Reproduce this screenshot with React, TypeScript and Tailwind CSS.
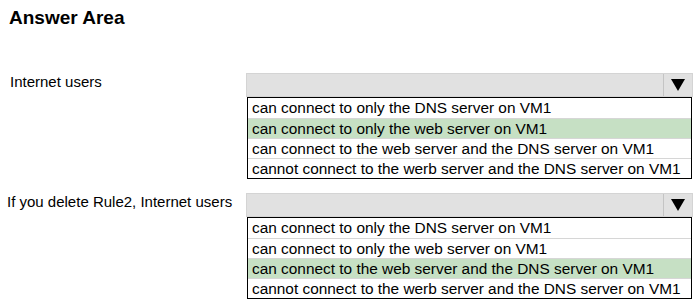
import React from "react";

const options = [
  "can connect to only the DNS server on VM1",
  "can connect to only the web server on VM1",
  "can connect to the web server and the DNS server on VM1",
  "cannot connect to the werb server and the DNS server on VM1",
];

function Dropdown({ selected }: { selected: number }) {
  return (
    <div className="w-[447px] flex flex-col">
      <div className="h-[24px] flex bg-[#e1e1e1] border border-[#d4d4d4]">
        <div className="flex-1" />
        <div className="w-[29px] border-l border-[#c4c4c4] flex items-center justify-center">
          <svg width="14" height="12" viewBox="0 0 14 12">
            <polygon points="0,0 14,0 7,12" fill="#000" />
          </svg>
        </div>
      </div>
      <div className="mx-[1px] border border-black flex flex-col">
        {options.map((o, i) => (
          <div
            key={i}
            className={`h-[20px] flex items-center pl-[4px] text-[15.4px] leading-[20px] text-black whitespace-nowrap ${
              i > 0 ? "border-t border-[#d6d6d6]" : ""
            } ${i === selected ? "bg-[#c6e0c4]" : "bg-white"}`}
          >
            {o}
          </div>
        ))}
      </div>
    </div>
  );
}

export default function App() {
  return (
    <div
      className="w-[700px] h-[307px] bg-white text-black"
      style={{ fontFamily: '"Liberation Sans", Arial, sans-serif' }}
    >
      <div className="pl-[9px] pt-[6px] text-[19px] font-bold leading-[23px]">Answer Area</div>
      <div className="flex mt-[44px]">
        <div className="w-[246px] pl-[10px] text-[15px] leading-[18px]">Internet users</div>
        <Dropdown selected={1} />
      </div>
      <div className="flex mt-[14px]">
        <div className="w-[246px] pl-[7px] text-[15px] leading-[18px]">If you delete Rule2, Internet users</div>
        <Dropdown selected={2} />
      </div>
    </div>
  );
}
